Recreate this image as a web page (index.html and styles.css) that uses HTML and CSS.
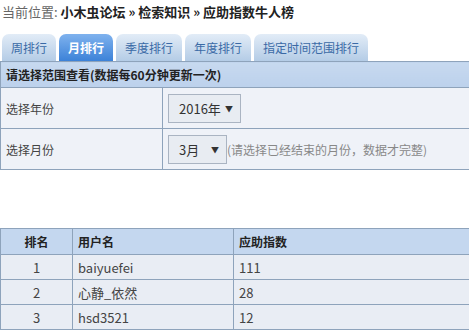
FILE: index.html
```html
<!DOCTYPE html>
<html lang="zh-CN">
<head>
    <meta charset="UTF-8">
    <title>应助指数牛人榜</title>
    <link rel="stylesheet" href="styles.css">
</head>
<body>
    <div class="crumb">当前位置: <b>小木虫论坛 » 检索知识 » 应助指数牛人榜</b></div>

    <ul class="tabs">
        <li><a href="#">周排行</a></li>
        <li class="active"><a href="#">月排行</a></li>
        <li><a href="#">季度排行</a></li>
        <li><a href="#">年度排行</a></li>
        <li><a href="#">指定时间范围排行</a></li>
    </ul>

    <table class="range">
        <tr class="head">
            <th colspan="2">请选择范围查看(数据每60分钟更新一次)</th>
        </tr>
        <tr>
            <td class="label">选择年份</td>
            <td><span class="sel sel-year">2016年<i>▼</i></span></td>
        </tr>
        <tr>
            <td class="label">选择月份</td>
            <td><span class="sel sel-month">3月<i>▼</i></span><span class="hint">(请选择已经结束的月份，数据才完整)</span></td>
        </tr>
    </table>

    <table class="rank">
        <tr class="head">
            <th class="num">排名</th>
            <th class="user">用户名</th>
            <th>应助指数</th>
        </tr>
        <tr>
            <td class="num">1</td>
            <td>baiyuefei</td>
            <td>111</td>
        </tr>
        <tr>
            <td class="num">2</td>
            <td>心静_依然</td>
            <td>28</td>
        </tr>
        <tr>
            <td class="num">3</td>
            <td>hsd3521</td>
            <td>12</td>
        </tr>
        <tr>
            <td class="num">&nbsp;</td>
            <td>&nbsp;</td>
            <td>&nbsp;</td>
        </tr>
    </table>
</body>
</html>
```

FILE: styles.css
```css
* {
    margin: 0;
    padding: 0;
    box-sizing: border-box;
}

body {
    font-family: "Noto Sans CJK SC", "Noto Sans", sans-serif;
    font-size: 12px;
    color: #333;
    background: #fff;
    overflow: hidden;
}

.crumb {
    padding: 4px 2px;
    font-size: 13px;
    line-height: 16px;
    color: #666;
}

.crumb b {
    color: #222;
}

.tabs {
    list-style: none;
    display: flex;
    gap: 3px;
    padding-left: 2px;
    margin-top: 10px;
}

.tabs li a {
    display: block;
    height: 27px;
    line-height: 27px;
    padding: 0 9px;
    border-radius: 7px 7px 0 0;
    background: linear-gradient(#e2ecf7, #b4cce6);
    color: #3a6aa6;
    text-decoration: none;
}

.tabs li.active a {
    background: linear-gradient(#7fb2ee, #3c82d8);
    color: #fff;
    font-weight: bold;
}

table {
    border-collapse: collapse;
    width: 640px;
}

th, td {
    border: 1px solid #8ea3bb;
    text-align: left;
    padding: 0 5px;
}

.range .head th {
    height: 26px;
    background: linear-gradient(#c7d9ef, #bcd1ec);
    color: #222;
}

.range td {
    height: 41px;
    background: #eff2f8;
    color: #444;
}

.range td.label {
    width: 162px;
}

.sel {
    display: inline-flex;
    align-items: center;
    justify-content: space-between;
    height: 29px;
    padding: 0 7px 0 10px;
    border: 1px solid #aab4c2;
    background: #e8ecf2;
    font-size: 13px;
    color: #333;
    vertical-align: middle;
}

.sel i {
    font-style: normal;
    font-size: 8px;
    color: #333;
}

.sel-year {
    width: 73px;
}

.sel-month {
    width: 59px;
}

.hint {
    vertical-align: middle;
    color: #888;
    font-size: 12px;
}

.rank {
    margin-top: 58px;
}

.rank .head th {
    height: 26px;
    background: #c4d7ef;
    color: #222;
}

.rank td {
    height: 25px;
    background: #e9edf4;
    color: #444;
    font-size: 13px;
}

.rank .num {
    width: 72px;
    text-align: center;
}

.rank .user {
    width: 161px;
}
```
